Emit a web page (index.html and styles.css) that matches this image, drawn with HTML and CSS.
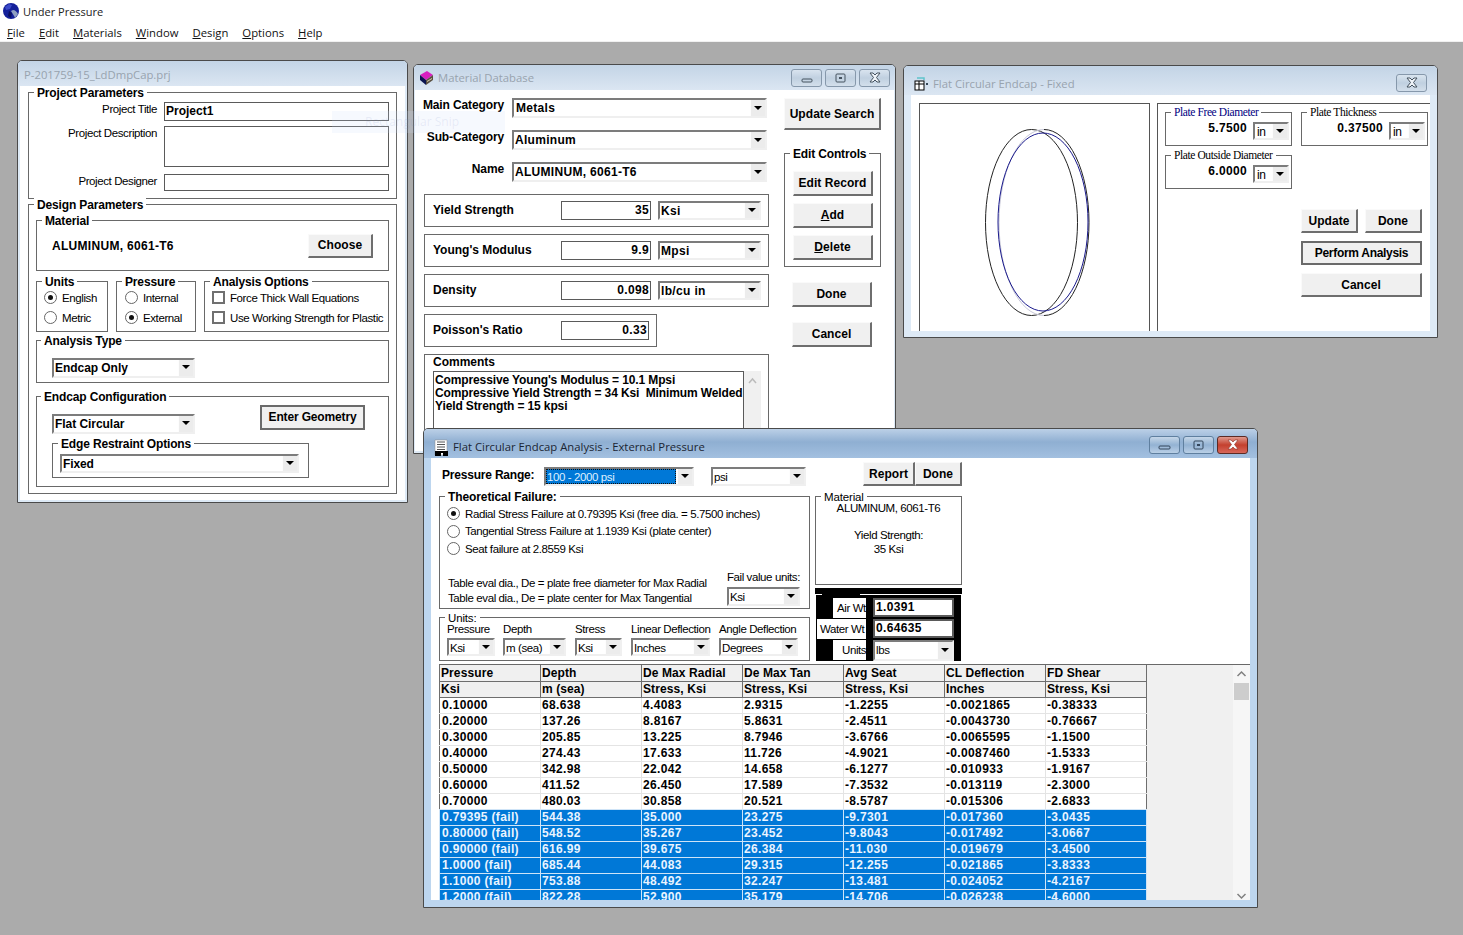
FILE: index.html
```html
<!DOCTYPE html>
<html lang="en">
<head>
<meta charset="utf-8">
<title>Under Pressure</title>
<link rel="stylesheet" href="styles.css">
</head>
<body>
<header class="app-title">
  <svg class="app-icon" width="18" height="18" viewBox="0 0 18 18"><circle cx="9" cy="9" r="8" fill="#14209a"/><path d="M3 5l4-3 3 1-2 4-4 1z" fill="#3a49c8"/><path d="M11 8c2 0 4 2 5 4l-3 4c-1-3-3-5-4-7z" fill="#8f9fc0"/><path d="M7 9l3 2-1 5-3-2z" fill="#0a1060"/></svg>
  <span>Under Pressure</span>
</header>
<nav class="menu">
  <span><u>F</u>ile</span><span><u>E</u>dit</span><span><u>M</u>aterials</span><span><u>W</u>indow</span><span><u>D</u>esign</span><span><u>O</u>ptions</span><span><u>H</u>elp</span>
</nav>

<main class="desktop">

  <!-- Project window -->
  <section class="win win-project">
    <div class="tbar tbar-short"><span class="ttext">P-201759-15_LdDmpCap.prj</span></div>
    <div class="client project-client">
      <div class="group project-params bold">
        <div class="legend">Project Parameters</div>
        <div class="project-grid">
          <label class="lite">Project Title</label><div class="field bold">Project1</div>
          <label class="lite">Project Description</label><div class="field"></div>
          <label class="lite">Project Designer</label><div class="field"></div>
        </div>
      </div>
      <div class="group design-params bold">
        <div class="legend legend-design">Design Parameters</div>
        <div class="group material-group">
          <div class="legend">Material</div>
          <div class="material-row"><span>ALUMINUM, 6061-T6</span><button class="btn btn-choose">Choose</button></div>
        </div>
        <div class="opts-row">
          <div class="group opt-units">
            <div class="legend">Units</div>
            <div class="opt lite"><i class="radio on"></i>English</div>
            <div class="opt lite"><i class="radio"></i>Metric</div>
          </div>
          <div class="group opt-pressure">
            <div class="legend">Pressure</div>
            <div class="opt lite"><i class="radio"></i>Internal</div>
            <div class="opt lite"><i class="radio on"></i>External</div>
          </div>
          <div class="group opt-analysis">
            <div class="legend">Analysis Options</div>
            <div class="opt lite"><i class="check"></i>Force Thick Wall Equations</div>
            <div class="opt lite"><i class="check"></i>Use Working Strength for Plastic</div>
          </div>
        </div>
        <div class="group analysis-type">
          <div class="legend legend-inset">Analysis Type</div>
          <div class="combo cb-project"><span class="val">Endcap Only</span><span class="arrow"></span></div>
        </div>
        <div class="group endcap-config">
          <div class="legend legend-inset">Endcap Configuration</div>
          <div class="endcap-row">
            <div class="combo cb-project cb-flat"><span class="val">Flat Circular</span><span class="arrow"></span></div>
            <button class="btn btn-default btn-geometry">Enter Geometry</button>
          </div>
          <div class="group edge-group">
            <div class="legend">Edge Restraint Options</div>
            <div class="combo cb-edge"><span class="val">Fixed</span><span class="arrow"></span></div>
          </div>
        </div>
      </div>
    </div>
  </section>

  <!-- Material database window -->
  <section class="win win-material">
    <div class="tbar tbar-short">
      <svg class="ticon" width="15" height="17" viewBox="0 0 15 17"><path d="M1 5l7-4 6 4-7 5z" fill="#d81fc0"/><path d="M1 5l6 5v5l-6-5z" fill="#0c1450"/><path d="M7 10l7-5v5l-7 5z" fill="#5a5040"/><path d="M8 11l5-3v1l-5 3z" fill="#d9d0b0"/></svg>
      <span class="ttext">Material Database</span>
      <div class="tbtns">
        <span class="tbtn"><svg width="31" height="18" viewBox="0 0 31 18"><rect x="11" y="10" width="10" height="3" rx="1" fill="none" stroke="#45525f"/></svg></span>
        <span class="tbtn"><svg width="31" height="18" viewBox="0 0 31 18"><rect x="11" y="5" width="9" height="8" rx="1" fill="none" stroke="#45525f"/><rect x="14" y="8" width="3" height="2" fill="#45525f"/></svg></span>
        <span class="tbtn"><svg width="31" height="18" viewBox="0 0 31 18"><path d="M11 4h3l2 2 2-2h3l-3.500 4.500L21 13h-3l-2-2-2 2h-3l3.500-4.500z" fill="#eef3f8" stroke="#45525f"/></svg></span>
      </div>
    </div>
    <div class="client material-client bold">
      <div class="mat-left">
        <div class="mat-selects">
          <label>Main Category</label><div class="combo cb-main"><span class="val val-indent">Metals</span><span class="arrow"></span></div>
          <label>Sub-Category</label><div class="combo cb-main"><span class="val">Aluminum</span><span class="arrow"></span></div>
          <label>Name</label><div class="combo cb-main"><span class="val">ALUMINUM, 6061-T6</span><span class="arrow"></span></div>
        </div>
        <div class="prop"><span class="prop-name">Yield Strength</span><div class="field num">35</div><div class="combo cb-unit"><span class="val">Ksi</span><span class="arrow"></span></div></div>
        <div class="prop"><span class="prop-name">Young's Modulus</span><div class="field num">9.9</div><div class="combo cb-unit"><span class="val">Mpsi</span><span class="arrow"></span></div></div>
        <div class="prop"><span class="prop-name">Density</span><div class="field num">0.098</div><div class="combo cb-unit"><span class="val">lb/cu in</span><span class="arrow"></span></div></div>
        <div class="prop prop-short"><span class="prop-name">Poisson's Ratio</span><div class="field num">0.33</div></div>
        <div class="comments">
          <div class="comments-title">Comments</div>
          <div class="comments-body">
            <div class="comments-text">Compressive Young's Modulus = 10.1 Mpsi<br>Compressive Yield Strength = 34 Ksi&nbsp; Minimum Welded<br>Yield Strength = 15 kpsi</div>
            <div class="comments-sb"><svg width="17" height="14" viewBox="0 0 17 14"><path d="M5 9l3.500-4L12 9" fill="none" stroke="#bbb" stroke-width="1.500"/></svg></div>
          </div>
        </div>
      </div>
      <div class="mat-right">
        <button class="btn btn-search">Update Search</button>
        <div class="group edit-controls">
          <div class="legend">Edit Controls</div>
          <button class="btn btn-edit">Edit Record</button>
          <button class="btn btn-edit"><u>A</u>dd</button>
          <button class="btn btn-edit"><u>D</u>elete</button>
        </div>
        <button class="btn btn-edit btn-done">Done</button>
        <button class="btn btn-edit btn-cancel">Cancel</button>
      </div>
    </div>
  </section>

  <!-- Geometry window -->
  <section class="win win-geometry">
    <div class="tbar tbar-tall">
      <svg class="ticon" width="15" height="14" viewBox="0 0 15 14"><path d="M3 1h7v2" fill="none" stroke="#5fc4cc" stroke-width="1.500"/><rect x="1" y="4" width="9" height="9" fill="#fff" stroke="#000"/><path d="M1 7h9M5 4v9" stroke="#000"/><path d="M12 7h2" stroke="#345" stroke-width="2"/></svg>
      <span class="ttext">Flat Circular Endcap - Fixed</span>
      <div class="tbtns tbtns-single">
        <span class="tbtn"><svg width="31" height="18" viewBox="0 0 31 18"><path d="M11 4h3l2 2 2-2h3l-3.500 4.500L21 13h-3l-2-2-2 2h-3l3.500-4.500z" fill="#eef3f8" stroke="#45525f"/></svg></span>
      </div>
    </div>
    <div class="client geometry-client">
      <div class="preview">
        <svg class="preview-svg" width="229" height="227" viewBox="919 104 229 227">
          <ellipse cx="1030.500" cy="222.500" rx="46" ry="93" fill="none" stroke="#222" stroke-width="1"/>
          <path d="M1043 129.500A45 93 0 0 1 1043 315.500" fill="none" stroke="#222"/>
          <path d="M1043 129.500A45 93 0 0 0 1043 315.500" fill="none" stroke="#c8c8d8"/>
          <ellipse cx="1042" cy="222" rx="45" ry="89" fill="none" stroke="#1a1a8c" stroke-width="1"/>
        </svg>
      </div>
      <div class="geo-panel bold">
        <div class="geo-groups">
          <div class="group geo-group">
            <div class="legend legend-serif legend-blue">Plate Free Diameter</div>
            <div class="geo-row"><span class="geo-val">5.7500</span><div class="combo cb-in"><span class="val lite">in</span><span class="arrow"></span></div></div>
          </div>
          <div class="group geo-group">
            <div class="legend legend-serif">Plate Thickness</div>
            <div class="geo-row"><span class="geo-val">0.37500</span><div class="combo cb-in"><span class="val lite">in</span><span class="arrow"></span></div></div>
          </div>
          <div class="group geo-group">
            <div class="legend legend-serif">Plate Outside Diameter</div>
            <div class="geo-row"><span class="geo-val">6.0000</span><div class="combo cb-in"><span class="val lite">in</span><span class="arrow"></span></div></div>
          </div>
        </div>
        <div class="geo-buttons">
          <button class="btn">Update</button>
          <button class="btn">Done</button>
          <button class="btn btn-default geo-wide btn-perform">Perform Analysis</button>
          <button class="btn geo-wide">Cancel</button>
        </div>
      </div>
    </div>
  </section>

  <!-- Analysis window -->
  <section class="win win-analysis">
    <div class="tbar tbar-tall tbar-active">
      <svg class="ticon" width="14" height="17" viewBox="0 0 14 17"><path d="M1 1h12v15H1z" fill="#fff" stroke="#888" stroke-width=".5"/><path d="M3 3h8M3 5.500h8M3 8h8M3 10.500h8" stroke="#555"/><path d="M1 12h6v5H1zM9 12h5v5H9z" fill="#000"/><path d="M7 12h2v2H7z" fill="#000"/></svg>
      <span class="ttext">Flat Circular Endcap Analysis - External Pressure</span>
      <div class="tbtns tbtns-active">
        <span class="tbtn"><svg width="31" height="18" viewBox="0 0 31 18"><rect x="10" y="10" width="11" height="3" rx="1" fill="none" stroke="#33465c"/></svg></span>
        <span class="tbtn"><svg width="31" height="18" viewBox="0 0 31 18"><rect x="11" y="5" width="9" height="8" rx="1" fill="none" stroke="#33465c"/><rect x="14" y="8" width="3" height="2" fill="#33465c"/></svg></span>
        <span class="tbtn tbtn-close"><svg width="31" height="18" viewBox="0 0 31 18"><path d="M11 4h3l2 2 2-2h3l-3.500 4.500L21 13h-3l-2-2-2 2h-3l3.500-4.500z" fill="#fff" stroke="#8a3025" stroke-width=".6"/></svg></span>
      </div>
    </div>
    <div class="client analysis-client">
      <div class="analysis-top">
        <div class="range-row">
          <span class="bold range-label">Pressure Range:</span>
          <div class="combo cb-range"><span class="val lite val-selected">100 - 2000 psi</span><span class="arrow"></span></div>
          <div class="combo cb-psi"><span class="val lite">psi</span><span class="arrow"></span></div>
        </div>
        <div class="report-row bold">
          <button class="btn btn-report">Report</button><button class="btn btn-report-done">Done</button>
        </div>
        <div class="left-stack lite">
          <div class="group failure-group">
            <div class="legend bold">Theoretical Failure:</div>
            <div class="fail-opt"><i class="radio on"></i>Radial Stress Failure at 0.79395 Ksi (free dia. = 5.7500 inches)</div>
            <div class="fail-opt"><i class="radio"></i>Tangential Stress Failure at 1.1939 Ksi (plate center)</div>
            <div class="fail-opt"><i class="radio"></i>Seat failure at 2.8559 Ksi</div>
            <div class="fail-bottom">
              <div class="eval-text">Table eval dia., De = plate free diameter for Max Radial<br>Table eval dia., De = plate center for Max Tangential</div>
              <div class="fail-units">
                <div>Fail value units:</div>
                <div class="combo cb-fail"><span class="val">Ksi</span><span class="arrow"></span></div>
              </div>
            </div>
          </div>
          <div class="group units-group">
            <div class="legend">Units:</div>
            <div class="unit-cols">
              <div class="unit-col"><span>Pressure</span><div class="combo"><span class="val">Ksi</span><span class="arrow"></span></div></div>
              <div class="unit-col"><span>Depth</span><div class="combo"><span class="val">m (sea)</span><span class="arrow"></span></div></div>
              <div class="unit-col"><span>Stress</span><div class="combo"><span class="val">Ksi</span><span class="arrow"></span></div></div>
              <div class="unit-col"><span>Linear Deflection</span><div class="combo"><span class="val">Inches</span><span class="arrow"></span></div></div>
              <div class="unit-col"><span>Angle Deflection</span><div class="combo"><span class="val">Degrees</span><span class="arrow"></span></div></div>
            </div>
          </div>
        </div>
        <div class="right-stack lite">
          <div class="group matinfo-group">
            <div class="legend">Material</div>
            <div class="matinfo">ALUMINUM, 6061-T6<br><br>Yield Strength:<br>35 Ksi</div>
          </div>
          <div class="weight-box">
            <div class="weight-bar"></div>
            <div class="weight-notch"></div>
            <div class="weight-grid">
              <span class="w-label w-air">Air Wt</span><div class="field bold w-field">1.0391</div>
              <span class="w-label w-water">Water Wt</span><div class="field bold w-field">0.64635</div>
              <span class="w-label w-units">Units</span><div class="combo cb-lbs"><span class="val">lbs</span><span class="arrow"></span></div>
            </div>
          </div>
        </div>
      </div>
      <div class="results">
        <table class="results-table bold">
          <thead>
            <tr><th>Pressure</th><th>Depth</th><th>De Max Radial</th><th>De Max Tan</th><th>Avg Seat</th><th>CL Deflection</th><th>FD Shear</th></tr>
            <tr><th>Ksi</th><th>m (sea)</th><th>Stress, Ksi</th><th>Stress, Ksi</th><th>Stress, Ksi</th><th>Inches</th><th>Stress, Ksi</th></tr>
          </thead>
          <tbody>
            <tr><td>0.10000</td><td>68.638</td><td>4.4083</td><td>2.9315</td><td>-1.2255</td><td>-0.0021865</td><td>-0.38333</td></tr>
            <tr><td>0.20000</td><td>137.26</td><td>8.8167</td><td>5.8631</td><td>-2.4511</td><td>-0.0043730</td><td>-0.76667</td></tr>
            <tr><td>0.30000</td><td>205.85</td><td>13.225</td><td>8.7946</td><td>-3.6766</td><td>-0.0065595</td><td>-1.1500</td></tr>
            <tr><td>0.40000</td><td>274.43</td><td>17.633</td><td>11.726</td><td>-4.9021</td><td>-0.0087460</td><td>-1.5333</td></tr>
            <tr><td>0.50000</td><td>342.98</td><td>22.042</td><td>14.658</td><td>-6.1277</td><td>-0.010933</td><td>-1.9167</td></tr>
            <tr><td>0.60000</td><td>411.52</td><td>26.450</td><td>17.589</td><td>-7.3532</td><td>-0.013119</td><td>-2.3000</td></tr>
            <tr class="last-ok"><td>0.70000</td><td>480.03</td><td>30.858</td><td>20.521</td><td>-8.5787</td><td>-0.015306</td><td>-2.6833</td></tr>
            <tr class="fail"><td>0.79395 (fail)</td><td>544.38</td><td>35.000</td><td>23.275</td><td>-9.7301</td><td>-0.017360</td><td>-3.0435</td></tr>
            <tr class="fail"><td>0.80000 (fail)</td><td>548.52</td><td>35.267</td><td>23.452</td><td>-9.8043</td><td>-0.017492</td><td>-3.0667</td></tr>
            <tr class="fail"><td>0.90000 (fail)</td><td>616.99</td><td>39.675</td><td>26.384</td><td>-11.030</td><td>-0.019679</td><td>-3.4500</td></tr>
            <tr class="fail"><td>1.0000 (fail)</td><td>685.44</td><td>44.083</td><td>29.315</td><td>-12.255</td><td>-0.021865</td><td>-3.8333</td></tr>
            <tr class="fail"><td>1.1000 (fail)</td><td>753.88</td><td>48.492</td><td>32.247</td><td>-13.481</td><td>-0.024052</td><td>-4.2167</td></tr>
            <tr class="fail"><td>1.2000 (fail)</td><td>822.28</td><td>52.900</td><td>35.179</td><td>-14.706</td><td>-0.026238</td><td>-4.6000</td></tr>
          </tbody>
        </table>
        <div class="results-fill"></div>
        <div class="results-sb">
          <svg width="17" height="16" viewBox="0 0 17 16"><path d="M4.500 11l4-4 4 4" fill="none" stroke="#808080" stroke-width="1.500"/></svg>
          <div class="sb-thumb"></div>
          <svg class="sb-down" width="17" height="16" viewBox="0 0 17 16"><path d="M4.500 10l4 4 4-4" fill="none" stroke="#808080" stroke-width="1.500"/></svg>
        </div>
      </div>
    </div>
  </section>

  <div class="snip-ghost"><span>Rectangular Snip</span></div>
</main>
</body>
</html>
```

FILE: styles.css
```css
* { box-sizing: border-box; }
html, body { margin: 0; height: 100%; }
body {
  width: 1463px; height: 935px; overflow: hidden; display: flex; flex-direction: column;
  background: #ababab; color: #000;
  font: 11.5px/14px "Liberation Sans", sans-serif;
}
button { font: inherit; color: inherit; padding: 0; letter-spacing: inherit; }
label { display: block; }

.app-title {
  height: 22px; flex: none; background: #fff; display: flex; align-items: center; gap: 3px;
  padding: 2px 0 0 2px; font: 11px/16px "Open Sans", sans-serif; color: #222;
}
.app-icon { flex: none; margin-top: -3px; }
.menu {
  height: 20px; flex: none; background: #fff; border-bottom: 1px solid #f0f0f0; display: flex; gap: 14px;
  padding: 3px 0 0 7px; font: 11.3px/16px "Open Sans", sans-serif; color: #111;
}
.desktop { position: relative; flex: 1; background: #ababab; }

/* Windows */
.win {
  position: absolute; display: flex; flex-direction: column;
  border: 1px solid #4a4a4a; border-radius: 5px 5px 0 0; background: #deeaf6;
}
.win-project  { left: 17px;  top: 18px;  width: 391px; height: 443px; padding: 0 2px 2px; }
.win-material { left: 413px; top: 22px;  width: 483px; height: 390px; padding: 0 1px 2px; }
.win-geometry { left: 903px; top: 23px;  width: 535px; height: 273px; padding: 0 7px 6px; }
.win-analysis { left: 423px; top: 386px; width: 835px; height: 480px; padding: 0 7px 7px; background: #bdd6ef; }

.tbar {
  flex: none; display: flex; align-items: center; margin: 0 -2px; padding-left: 6px;
  background: linear-gradient(#c3d4e6, #dbe6f2);
  font: 11.3px/16px "Open Sans", sans-serif; color: #98a3ae; border-radius: 4px 4px 0 0;
}
.tbar-short { height: 25px; }
.win-project .tbar { padding-top: 3px; }
.win-material .tbar { margin: 0 -1px; padding-left: 5px; padding-top: 1px; }
.tbar-tall { height: 29px; margin: 0 -7px; padding-left: 10px; padding-top: 7px; }
.tbar-active { background: linear-gradient(#bcd0e7 0, #8fafd2 45%, #a3c0e0 100%); color: #1a2533; }
.ticon { flex: none; margin-right: 4px; }
.tbar-active .ticon { margin-right: 5px; }
.tbtns { margin-left: auto; display: flex; gap: 3px; margin-right: 5px; }
.win-material .tbtns { margin-top: -1px; }
.win-geometry .tbtns { margin-right: 10px; margin-top: -3px; }
.tbtns-active { margin-right: 9px !important; margin-top: -5px !important; }
.tbtn {
  display: block; width: 31px; height: 18px; border: 1px solid #8698ab; border-radius: 3px;
  background: linear-gradient(#d9e4ef, #c0d0e0 50%, #d3dfeb);
}
.tbtn svg { display: block; margin: -1px; }
.tbtns-active .tbtn { background: linear-gradient(#c5d6e8, #93b2d3 50%, #b9cfe6); border-color: #5f7f9f; }
.tbtns-active .tbtn-close { background: linear-gradient(#e09a8e, #c4402e 50%, #d7675a); border-color: #5c2a24; }

.client { flex: 1; min-height: 0; background: #fff; }

/* Shared controls */
.bold { font-weight: 700; font-size: 12px; letter-spacing: 0; }
.lite { font-weight: 400; font-size: 11.5px; letter-spacing: -.4px; }
.group { border: 1px solid #696969; background: #fff; }
.legend {
  width: fit-content; height: 14px; line-height: 14px; margin: -7px 0 0 5px; padding: 0 3px;
  background: #fff; white-space: nowrap; letter-spacing: -.15px;
}
.legend-design { margin-left: -2px; }
.legend-inset { margin-left: -11px; }
.legend-serif { font: 400 11.5px/14px "Liberation Serif", serif; letter-spacing: -.4px; margin-top: -8px; margin-bottom: 1px; }
.legend-blue { color: #00007f; }
.field {
  border: 1px solid #5a5a5a; background: #fff; padding: 0 1px; line-height: 16px;
  overflow: hidden; white-space: nowrap;
}
.num { text-align: right; letter-spacing: .35px; }
.btn {
  display: block; background: #f0f0f0; text-align: center; white-space: nowrap;
  border: 2px solid; border-color: #fafafa #6e6e6e #6e6e6e #fafafa; border-width: 1px 2px 2px 1px;
  font-weight: 700; font-size: 12px; letter-spacing: .05px;
}
.btn-default { border: 2px solid #6a6a6a; letter-spacing: -.15px; }
.btn-perform { letter-spacing: -.3px; }
.combo {
  display: flex; height: 19px; background: #fff; overflow: hidden;
  border: 2px solid; border-color: #7c7c7c #f0f0f0 #efefef #7c7c7c;
}
.val { flex: 1; min-width: 0; padding-left: 1px; line-height: 17px; white-space: nowrap; overflow: hidden; }
.val-indent { padding-left: 2px; }
.arrow {
  flex: none; width: 17px; margin: -2px -2px -2px 0; background: #ececec; display: flex;
  align-items: center; justify-content: center;
  border: solid; border-color: #dcdcdc #6e6e6e #7e7e7e #fdfdfd; border-width: 1px 2px 2px 1px;
}
.arrow::after {
  content: ""; border: 4px solid transparent; border-top-color: #000; border-bottom-width: 0;
}
.radio {
  display: flex; align-items: center; justify-content: center; flex: none;
  width: 13px; height: 13px; border-radius: 50%; border: 1.5px solid #666; background: #fff;
}
.radio.on::after { content: ""; width: 5px; height: 5px; border-radius: 50%; background: #111; }
.check { display: block; flex: none; width: 13px; height: 13px; border: 2px solid #707070; background: #fff; }

/* Project window */
.project-client { padding: 6px 8px; display: flex; flex-direction: column; gap: 5px; }
.project-params { height: 107px; }
.project-grid {
  display: grid; grid-template-columns: 128px 225px; column-gap: 7px; row-gap: 5px;
  grid-template-rows: 19px 41px 19px; margin-top: 2px; text-align: right;
}
.project-grid .field { text-align: left; }
.project-grid label:nth-of-type(3), .project-grid label:nth-of-type(3) + .field { margin-top: 2px; }
.design-params { height: 291px; padding: 0 7px; }
.material-group { height: 51px; margin-top: 8px; }
.material-row { display: flex; justify-content: space-between; align-items: center; padding: 6px 15px 0; letter-spacing: .3px; }
.btn-choose { width: 65px; height: 24px; }
.opts-row { display: flex; gap: 8px; margin-top: 10px; }
.opts-row .group { height: 51px; }
.opt-units { width: 72px; }
.opt-pressure { width: 80px; }
.opt-analysis { flex: 1; }
.opt { display: flex; align-items: center; gap: 5px; height: 20px; padding-left: 8px; white-space: nowrap; margin-top: -1px; }
.opt + .opt { margin-top: 0; }
.opt-units .opt { padding-left: 7px; }
.opt-analysis .opt { padding-left: 7px; }
.analysis-type { height: 43px; margin-top: 8px; padding-left: 15px; }
.analysis-type .combo { margin-top: 10px; }
.cb-project { width: 143px; height: 20px; letter-spacing: -.05px; }
.endcap-config { height: 91px; margin-top: 13px; padding-left: 15px; }
.endcap-row { display: flex; align-items: flex-start; height: 29px; }
.cb-flat { margin-top: 10px; }
.btn-geometry { width: 105px; height: 25px; margin: 1px 0 0 65px; }
.edge-group { width: 257px; height: 35px; margin-top: 10px; padding-left: 7px; }
.edge-group .legend { margin-left: -2px; }
.cb-edge { width: 239px; margin-top: 3px; letter-spacing: -.1px; }

/* Material window */
.material-client { display: flex; padding: 8px 0 0 9px; overflow: hidden; }
.mat-left { width: 345px; flex: none; }
.mat-selects {
  display: grid; grid-template-columns: 88px 255px; column-gap: 8px; row-gap: 12px; margin-left: -8px;
  grid-template-rows: repeat(3, 20px); text-align: right; white-space: nowrap; letter-spacing: -.12px;
}
.cb-main { height: 20px; text-align: left; letter-spacing: .3px; }
.prop {
  display: flex; align-items: center; height: 33px; margin-top: 7px; padding-left: 8px;
  border: 1px solid #696969;
}
.mat-selects + .prop { margin-top: 12px; }
.prop-name { width: 128px; flex: none; margin-top: -2px; }
.prop .field { width: 90px; height: 19px; margin-right: 7px; }
.cb-unit { width: 103px; letter-spacing: .35px; }
.prop-short { width: 233px; }
.comments { height: 110px; margin-top: 7px; border: 1px solid #696969; padding: 0 0 0 8px; }
.comments-title { height: 16px; }
.comments-body { display: flex; width: 328px; }
.comments-text {
  width: 311px; height: 70px; flex: none; border: 1px solid #5a5a5a; padding: 2px 0 0 1px;
  line-height: 13px; white-space: nowrap; overflow: hidden; letter-spacing: -.12px;
}
.comments-sb { flex: 1; background: #f0f0f0; padding-top: 3px; }
.comments-sb svg { display: block; }
.mat-right { width: 97px; flex: none; margin-left: 15px; }
.btn-search { width: 97px; height: 32px; }
.edit-controls { height: 114px; margin-top: 23px; padding: 0 8px; }
.edit-controls .legend { margin-left: -3px; }
.btn-edit { width: 80px; height: 25px; margin-top: 7px; }
.edit-controls .btn-edit:first-of-type { margin-top: 10px; }
.mat-right > .btn-done { margin: 15px 0 0 8px; }
.mat-right > .btn-cancel { margin: 15px 0 0 8px; }

/* Geometry window */
.geometry-client { display: flex; gap: 7px; padding: 8px 0 0 8px; overflow: hidden; }
.preview { width: 231px; flex: none; border: 1px solid #555; border-bottom: 0; }
.preview-svg { display: block; }
.geo-panel { flex: 1; border: solid #555; border-width: 1px 0 0 1px; padding: 8px 0 0 7px; }
.geo-groups { display: grid; grid-template-columns: 127px 127px; gap: 9px; }
.geo-group { height: 34px; }
.geo-row { display: flex; justify-content: flex-end; align-items: flex-start; padding-right: 2px; }
.geo-val { margin-top: 1px; margin-right: 6px; letter-spacing: .35px; }
.cb-in { width: 36px; height: 18px; margin-top: 2px; }
.cb-in .val { padding-left: 2px; font-size: 12px; line-height: 16px; }
.geo-buttons {
  display: grid; grid-template-columns: 57px 57px; grid-auto-rows: 24px; gap: 8px 7px;
  margin: 20px 0 0 136px;
}
.geo-wide { grid-column: 1 / -1; }

/* Analysis window */
.analysis-client { display: flex; flex-direction: column; }
.analysis-top {
  flex: none; display: grid; grid-template-columns: 371px 147px; column-gap: 5px;
  grid-template-rows: 24px auto; row-gap: 10px; padding: 4px 0 0 8px; height: 206px;
}
.range-row { display: flex; align-items: center; }
.range-label { width: 102px; flex: none; margin: 1px 0 0 3px; letter-spacing: -.2px; }
.cb-range { width: 150px; margin-top: 5px; height: 19px; }
.cb-psi { width: 95px; margin: 5px 0 0 17px; height: 19px; }
.val-selected {
  background: #0078d7; color: #dfefff; outline: 1px dotted #111; outline-offset: -1px; margin-right: 1px; line-height: 16px;
}
.report-row { display: flex; justify-content: flex-end; }
.btn-report { width: 52px; height: 24px; }
.btn-report-done { width: 47px; height: 24px; }
.left-stack { display: flex; flex-direction: column; gap: 8px; }
.failure-group { height: 113px; }
.failure-group .legend { letter-spacing: -.1px; }
.fail-opt { display: flex; align-items: center; gap: 5px; height: 17.500px; padding-left: 7px; white-space: nowrap; }
.legend + .fail-opt { margin-top: 1px; }
.fail-bottom { display: flex; justify-content: space-between; padding: 12px 9px 0 8px; }
.eval-text { line-height: 15px; padding-top: 6px; white-space: nowrap; }
.cb-fail { width: 73px; margin-top: 3px; }
.units-group { height: 44px; }
.unit-cols { display: flex; gap: 9px; padding-left: 7px; margin-top: -3px; }
.unit-col { display: flex; flex-direction: column; gap: 2px; white-space: nowrap; }
.unit-col .combo { height: 18px; }
.unit-col .val { line-height: 16px; }
.unit-col:nth-child(1) { width: 48px; margin-right: -1px; }
.unit-col:nth-child(2) { width: 63px; }
.unit-col:nth-child(3) { width: 47px; }
.unit-col:nth-child(4), .unit-col:nth-child(5) { width: 79px; }
.right-stack { display: flex; flex-direction: column; gap: 3px; }
.matinfo-group { height: 89px; }
.matinfo { text-align: center; line-height: 13.500px; margin-top: -2px; }
.weight-box { height: 73px; background: #fff; display: flex; flex-direction: column; }
.weight-bar { height: 6px; background: #000; flex: none; }
.weight-notch { height: 1px; flex: none; width: 38px; margin-left: 7px; background: #000; }
.weight-grid {
  flex: 1; margin: 0 1px; background: #000; padding-top: 3px; padding-left: 1px;
  display: grid; grid-template-columns: 49px 81px; column-gap: 7px; grid-auto-rows: 20px; row-gap: 1px; align-content: start;
}
.w-label { background: #fff; overflow: hidden; white-space: nowrap; line-height: 20px; align-self: end; height: 20px; }
.w-air { margin-left: 16px; padding-left: 4px; margin-top: 3px; }
.w-water { padding-left: 3px; }
.w-units { margin-left: 16px; padding-left: 9px; }
.w-field { height: 19px; line-height: 15px; border: 2px solid #5a5a5a; letter-spacing: .35px; }
.cb-lbs { height: 21px; }

.results { flex: 1; min-height: 0; display: flex; margin-left: 8px; overflow: hidden; background: #f0f0f0; border-top: 1px solid #696969; }
.results-table {
  flex: none; width: 708px; table-layout: fixed; border-collapse: collapse; align-self: flex-start;
}
.results-table th, .results-table td {
  width: 101px; height: 16px; padding: 0 0 0 1px; line-height: 15px; text-align: left; font-weight: 700; white-space: nowrap; overflow: hidden;
  border: 1px solid #e4e4e4;
}
.results-table td { letter-spacing: .35px; }
.results-table td:first-child { padding-left: 2px; }
.results-table th { background: #f0f0f0; border-color: #6e6e6e; letter-spacing: .1px; }
.results-table thead tr:first-child th { border-top: 0; padding-top: 1px; }
.results-table td { background: #fff; }
.results-table tbody td:first-child { border-left-color: #6e6e6e; }
.results-table tbody td:last-child { border-right-color: #6e6e6e; }
.results-table tr.fail td { background: #0078d7; color: #eaf4ff; border-color: #cfe4f7; }
.results-table tr.last-ok td { border-bottom-color: #cfe4f7; }
.results-fill { width: 86px; flex: none; }
.results-sb { flex: 1; background: #f6f6f6; display: flex; flex-direction: column; }
.results-sb svg { display: block; flex: none; }
.sb-thumb { height: 17px; margin: 2px 1px 0; background: #cdcdcd; flex: none; }
.sb-down { margin-top: auto; }

.snip-ghost {
  position: absolute; left: 332px; top: 69px; width: 173px; height: 22px;
  background: rgba(205, 222, 250, .18); color: rgba(120, 140, 190, .14); padding: 4px 0 0 33px;
  font: 12px/14px "Open Sans", sans-serif; white-space: nowrap;
}
```
